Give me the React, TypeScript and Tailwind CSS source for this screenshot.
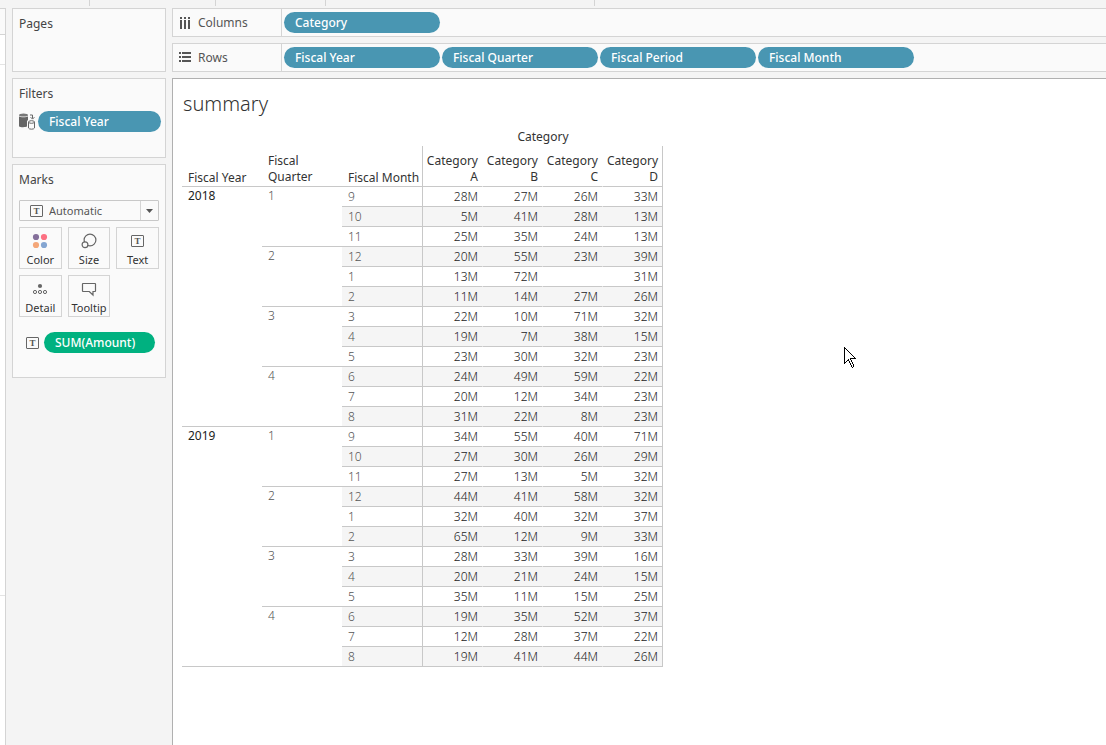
import React, { useState } from 'react';

interface MonthRow {
  month: number;
  values: string[];
}

interface QuarterGroup {
  quarter: number;
  months: MonthRow[];
}

interface YearGroup {
  year: number;
  quarters: QuarterGroup[];
}

const categories = ['Category A', 'Category B', 'Category C', 'Category D'];

const summary: YearGroup[] = [
  {
    year: 2018,
    quarters: [
      {
        quarter: 1,
        months: [
          { month: 9, values: ['28M', '27M', '26M', '33M'] },
          { month: 10, values: ['5M', '41M', '28M', '13M'] },
          { month: 11, values: ['25M', '35M', '24M', '13M'] },
        ],
      },
      {
        quarter: 2,
        months: [
          { month: 12, values: ['20M', '55M', '23M', '39M'] },
          { month: 1, values: ['13M', '72M', '', '31M'] },
          { month: 2, values: ['11M', '14M', '27M', '26M'] },
        ],
      },
      {
        quarter: 3,
        months: [
          { month: 3, values: ['22M', '10M', '71M', '32M'] },
          { month: 4, values: ['19M', '7M', '38M', '15M'] },
          { month: 5, values: ['23M', '30M', '32M', '23M'] },
        ],
      },
      {
        quarter: 4,
        months: [
          { month: 6, values: ['24M', '49M', '59M', '22M'] },
          { month: 7, values: ['20M', '12M', '34M', '23M'] },
          { month: 8, values: ['31M', '22M', '8M', '23M'] },
        ],
      },
    ],
  },
  {
    year: 2019,
    quarters: [
      {
        quarter: 1,
        months: [
          { month: 9, values: ['34M', '55M', '40M', '71M'] },
          { month: 10, values: ['27M', '30M', '26M', '29M'] },
          { month: 11, values: ['27M', '13M', '5M', '32M'] },
        ],
      },
      {
        quarter: 2,
        months: [
          { month: 12, values: ['44M', '41M', '58M', '32M'] },
          { month: 1, values: ['32M', '40M', '32M', '37M'] },
          { month: 2, values: ['65M', '12M', '9M', '33M'] },
        ],
      },
      {
        quarter: 3,
        months: [
          { month: 3, values: ['28M', '33M', '39M', '16M'] },
          { month: 4, values: ['20M', '21M', '24M', '15M'] },
          { month: 5, values: ['35M', '11M', '15M', '25M'] },
        ],
      },
      {
        quarter: 4,
        months: [
          { month: 6, values: ['19M', '35M', '52M', '37M'] },
          { month: 7, values: ['12M', '28M', '37M', '22M'] },
          { month: 8, values: ['19M', '41M', '44M', '26M'] },
        ],
      },
    ],
  },
];

const TextIcon = () => (
  <svg width="13" height="12" viewBox="0 0 13 12" className="shrink-0" aria-hidden="true">
    <rect x="0.5" y="0.5" width="12" height="11" rx="0.5" fill="none" stroke="#666" />
    <text x="6.5" y="9" textAnchor="middle" fontSize="9" fontWeight="bold" fontFamily="Liberation Serif, serif" fill="#555">
      T
    </text>
  </svg>
);

const ColorIcon = () => (
  <svg width="16" height="16" viewBox="0 0 16 16" aria-hidden="true">
    <circle cx="4" cy="4" r="3.1" fill="#85709b" />
    <circle cx="12" cy="4" r="3.1" fill="#fc7082" />
    <circle cx="4" cy="12" r="3.1" fill="#f4a779" />
    <circle cx="12" cy="12" r="3.1" fill="#84a5d1" />
  </svg>
);

const SizeIcon = () => (
  <svg width="16" height="16" viewBox="0 0 16 16" fill="#fafafa" stroke="#666" aria-hidden="true">
    <circle cx="9" cy="7" r="5.9" strokeWidth="1.2" />
    <circle cx="4" cy="11.8" r="2.9" strokeWidth="1.2" />
  </svg>
);

const DetailIcon = () => (
  <svg width="16" height="16" viewBox="0 0 16 16" aria-hidden="true">
    <circle cx="8" cy="5" r="2.1" fill="#666" />
    <circle cx="3" cy="11" r="1.6" fill="none" stroke="#666" />
    <circle cx="8" cy="11" r="1.6" fill="none" stroke="#666" />
    <circle cx="13" cy="11" r="1.6" fill="none" stroke="#666" />
  </svg>
);

const TooltipIcon = () => (
  <svg width="16" height="16" viewBox="0 0 16 16" fill="none" stroke="#666" strokeWidth="1.2" aria-hidden="true">
    <path d="M2 2.5H14a.5.5 0 0 1 .5.5V10a.5.5 0 0 1-.5.5H12V14L8.3 10.5H2a.5.5 0 0 1-.5-.5V3a.5.5 0 0 1 .5-.5Z" />
  </svg>
);

const ColumnsIcon = () => (
  <svg width="12" height="12" viewBox="0 0 12 12" fill="#555" shapeRendering="crispEdges" aria-hidden="true">
    <path d="M1 0h2v2H1zM5 0h2v2H5zM9 0h2v2H9zM1 3h2v9H1zM5 3h2v9H5zM9 3h2v9H9z" />
  </svg>
);

const RowsIcon = () => (
  <svg width="12" height="12" viewBox="0 0 12 12" fill="#555" shapeRendering="crispEdges" aria-hidden="true">
    <path d="M0 0h2v2H0zM3 0h9v2H3zM0 4h2v2H0zM3 4h9v2H3zM0 8h2v2H0zM3 8h9v2H3z" />
  </svg>
);

const DataSourceIcon = () => (
  <svg width="17" height="17" viewBox="0 0 17 17" className="shrink-0" aria-hidden="true">
    <path d="M0 3.2C1 4.6 8 4.6 9 3.2V7.5H8V13.6C6 14.4 1 14.4 0 13.2Z" fill="#666" />
    <ellipse cx="4.5" cy="2" rx="4.5" ry="1.6" fill="#777" />
    <path d="M11 2h2.5v3.5M11.6 4.2l1.9 1.9 1.9-1.9" fill="none" stroke="#666" />
    <path d="M9.5 9V15C10 16.6 15 16.6 15.5 15V9" fill="#fafafa" stroke="#666" />
    <ellipse cx="12.5" cy="9" rx="3" ry="1.3" fill="#fafafa" stroke="#666" />
  </svg>
);

const markButtons = [
  { label: 'Color', icon: <ColorIcon /> },
  { label: 'Size', icon: <SizeIcon /> },
  { label: 'Text', icon: <TextIcon /> },
  { label: 'Detail', icon: <DetailIcon /> },
  { label: 'Tooltip', icon: <TooltipIcon /> },
];

interface PillProps {
  label: string;
  className: string;
}

const Pill: React.FC<PillProps> = ({ label, className }) => (
  <button
    type="button"
    className={`h-[21px] truncate rounded-full px-[11px] text-left text-xs font-medium text-white ${className}`}
  >
    {label}
  </button>
);

interface ShelfProps {
  label: string;
  icon: React.ReactNode;
  pills: string[];
}

const Shelf: React.FC<ShelfProps> = ({ label, icon, pills }) => (
  <section className="flex h-[29px] border border-r-0 border-[#d4d4d4] bg-[#fafafa]">
    <h2 className="flex w-[109px] shrink-0 items-center gap-[7px] border-r border-[#d4d4d4] pl-1.5 text-xs text-[#555]">
      {icon}
      {label}
    </h2>
    <div className="flex min-w-0 items-center gap-0.5 pl-0.5">
      {pills.map(pill => (
        <Pill key={pill} label={pill} className="w-[156px] bg-[#4996b2]" />
      ))}
    </div>
  </section>
);

const MarksCard = () => {
  const [markType, setMarkType] = useState('Automatic');

  return (
    <section className="h-[214px] border border-[#d4d4d4] bg-[#fafafa] px-1.5 pt-[7px]">
      <h2 className="text-xs leading-4 text-[#444]">Marks</h2>
      <div className="relative mt-3 h-[21px] rounded-[1px] border border-[#c8c8c8]">
        <select
          aria-label="Mark type"
          value={markType}
          onChange={e => setMarkType(e.target.value)}
          className="block h-full w-full appearance-none bg-transparent pt-px pl-[29px] text-[11px] text-[#555]"
        >
          <option>Automatic</option>
          <option>Bar</option>
          <option>Line</option>
          <option>Text</option>
        </select>
        <span className="pointer-events-none absolute inset-y-0 left-2.5 flex items-center">
          <TextIcon />
        </span>
        <span className="pointer-events-none absolute inset-y-0 right-0 flex w-[18px] items-center justify-center border-l border-[#d4d4d4]">
          <svg width="7" height="4" viewBox="0 0 7 4" aria-hidden="true">
            <path d="M0 0H7L3.5 4Z" fill="#555" />
          </svg>
        </span>
      </div>
      <div className="mt-1.5 grid grid-cols-3 gap-1.5">
        {markButtons.map(({ label, icon }) => (
          <button
            key={label}
            type="button"
            className="flex h-[42px] flex-col items-center border border-[#d4d4d4] pt-[5px] text-[11px] leading-4 text-[#333]"
          >
            <span className="flex h-4 items-center">{icon}</span>
            <span className="mt-[3px]">{label}</span>
          </button>
        ))}
      </div>
      <div className="mt-[15px] flex items-center gap-[5px] pl-[7px]">
        <TextIcon />
        <Pill label="SUM(Amount)" className="w-[111px] bg-[#00b180]" />
      </div>
    </section>
  );
};

const SummaryTable = () => (
  <table className="mt-2 w-[481px] table-fixed border-separate border-spacing-0 text-xs leading-4">
    <colgroup>
      <col className="w-20" />
      <col className="w-20" />
      <col className="w-[81px]" />
      <col className="w-[60px]" />
      <col className="w-[60px]" />
      <col className="w-[60px]" />
      <col className="w-[60px]" />
    </colgroup>
    <thead className="text-[#333]">
      <tr className="h-[19px]">
        <td colSpan={3} className="p-0" />
        <th colSpan={4} className="p-0 text-center font-normal">Category</th>
      </tr>
      <tr className="h-[41px] align-bottom">
        <th className="border-b border-[#c8c8c8] p-0 pl-1.5 text-left font-normal">Fiscal Year</th>
        <th className="border-b border-[#c8c8c8] p-0 pr-5 pb-px pl-1.5 text-left font-normal">Fiscal Quarter</th>
        <th className="border-r border-b border-[#c8c8c8] p-0 pl-1.5 text-left font-normal whitespace-nowrap">
          Fiscal Month
        </th>
        {categories.map(category => (
          <th
            key={category}
            className="border-r border-b border-r-transparent border-b-[#c8c8c8] p-0 pr-1 pb-px text-right font-normal last:border-r-[#c8c8c8]"
          >
            {category}
          </th>
        ))}
      </tr>
    </thead>
    <tbody>
      {summary.map(({ year, quarters }) =>
        quarters.map(({ quarter, months }, q) =>
          months.map(({ month, values }, m) => {
            // banding alternates per month, quarters hold an odd number of rows
            const band = (q * months.length + m) % 2 === 1 ? 'bg-[#f5f5f5]' : '';
            return (
              <tr key={`${year}-${month}`} className="h-5">
                {q === 0 && m === 0 && (
                  <th rowSpan={12} className="border-b border-[#c8c8c8] p-0 pt-px pl-1.5 text-left align-top font-normal text-[#222]">
                    {year}
                  </th>
                )}
                {m === 0 && (
                  <th rowSpan={3} className="border-b border-[#c8c8c8] p-0 pt-px pl-1.5 text-left align-top font-light text-[#555]">
                    {quarter}
                  </th>
                )}
                <th className={`border-r border-b border-[#c8c8c8] p-0 pl-1.5 text-left font-light text-[#555] ${band}`}>
                  {month}
                </th>
                {values.map((value, i) => (
                  <td
                    key={categories[i]}
                    className={`border-r border-b border-r-transparent border-b-[#c8c8c8] p-0 pr-1 text-right font-light text-[#222] last:border-r-[#c8c8c8] ${band}`}
                  >
                    {value}
                  </td>
                ))}
              </tr>
            );
          })
        )
      )}
    </tbody>
  </table>
);

const App: React.FC = () => {
  return (
    <div className="relative flex min-h-screen flex-col overflow-hidden bg-[#f4f4f4] font-['Noto_Sans',sans-serif]">
      <div className="flex h-2">
        <div className="h-1.5 w-[90px] border-r border-[#d4d4d4]" />
        <div className="h-1.5 w-[126px] border-r border-[#d4d4d4]" />
        <div className="h-1.5 w-[110px] border-r border-[#d4d4d4]" />
        <div className="h-1.5 w-[269px] border-r border-[#d4d4d4]" />
      </div>

      <div className="flex flex-1">
        {/* edge of the data pane */}
        <div className="flex w-1.5 shrink-0 flex-col border-t border-r border-[#d4d4d4] bg-white">
          <div className="h-[26px] border-b border-[#d4d4d4] bg-[#fafafa]" />
          <div className="h-[30px] border-b border-[#e4e4e4]" />
          <div className="h-[531px] border-b border-[#e4e4e4]" />
        </div>

        <aside className="ml-1.5 flex w-[154px] shrink-0 flex-col gap-1.5">
          <section className="h-16 border border-[#d4d4d4] bg-[#fafafa] px-1.5 pt-[7px]">
            <h2 className="text-xs leading-4 text-[#444]">Pages</h2>
          </section>
          <section className="h-20 border border-[#d4d4d4] bg-[#fafafa] pt-[7px] pr-1 pl-1.5">
            <h2 className="text-xs leading-4 text-[#444]">Filters</h2>
            <div className="mt-[9px] flex items-center gap-0.5">
              <DataSourceIcon />
              <Pill label="Fiscal Year" className="flex-1 bg-[#4996b2]" />
            </div>
          </section>
          <MarksCard />
        </aside>

        <div className="ml-1.5 flex min-w-0 flex-1 flex-col">
          <div className="flex flex-col gap-1.5">
            <Shelf label="Columns" icon={<ColumnsIcon />} pills={['Category']} />
            <Shelf
              label="Rows"
              icon={<RowsIcon />}
              pills={['Fiscal Year', 'Fiscal Quarter', 'Fiscal Period', 'Fiscal Month']}
            />
          </div>
          <main className="mt-1.5 flex-1 border-t border-l border-[#b0b0b0] bg-white pt-[11px] pl-[9px]">
            <h1 className="mb-[9px] pl-px text-xl leading-7 font-light text-[#333]">summary</h1>
            <SummaryTable />
          </main>
        </div>
      </div>

      {/* mouse pointer */}
      <svg
        className="pointer-events-none absolute top-[347px] left-[844px]"
        width="13"
        height="22"
        viewBox="0 0 13 22"
        shapeRendering="crispEdges"
        aria-hidden="true"
      >
        <path d="M.5 .5V16.5L4.5 12.5L7.5 19.5L8.5 20.5L9.5 19.5V18.5L6.5 11.5H11.5Z" fill="#fff" stroke="#000" />
      </svg>
    </div>
  );
};

export default App;
